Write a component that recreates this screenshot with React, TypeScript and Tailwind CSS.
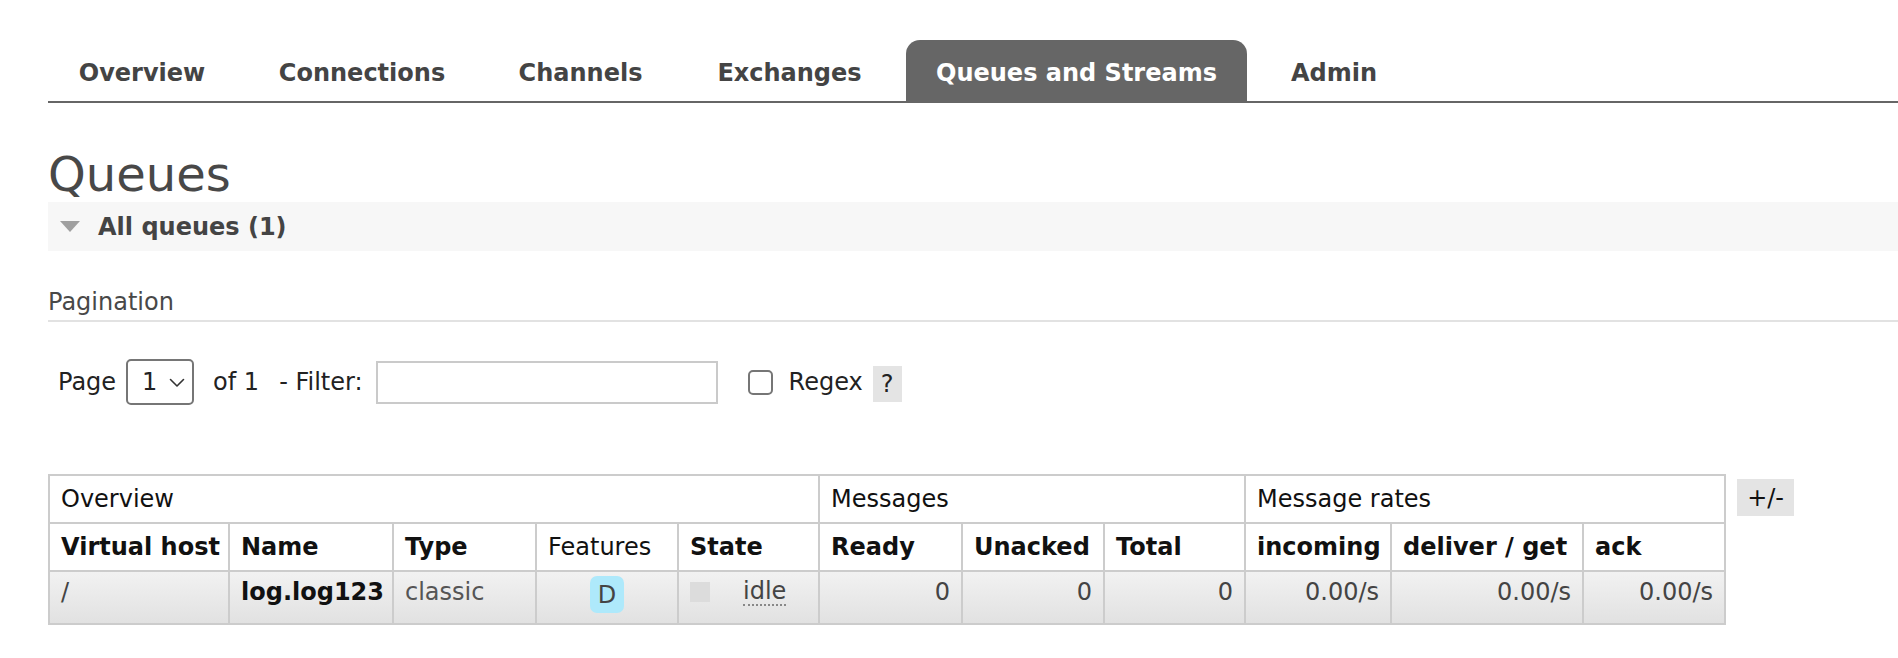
import React from "react";

const tabs = [
  { label: "Overview", w: "w-[188px]" },
  { label: "Connections", w: "w-[226px]" },
  { label: "Channels", w: "w-[185px]" },
  { label: "Exchanges", w: "w-[207px]" },
  { label: "Queues and Streams", w: "w-[341px]", selected: true },
  { label: "Admin", w: "w-[148px]" },
];

function Chevron() {
  return (
    <svg width="16" height="10" viewBox="0 0 16 10" fill="none">
      <path d="M1.5 1.5 L8 8 L14.5 1.5" stroke="#333" strokeWidth="1.6" strokeLinecap="round" strokeLinejoin="round" />
    </svg>
  );
}

export default function App() {
  const th = "border-2 border-[#ccc] px-[11px] text-left align-middle whitespace-nowrap text-[#111]";
  const td = "border-2 border-[#ccc] px-[11px] align-top whitespace-nowrap leading-[28px]";
  return (
    <div className="min-h-[658px] bg-white font-['DejaVu_Sans',Verdana,sans-serif] text-[24px] text-[#484848]">
      <div className="pl-[48px] pt-[40px]">
        {/* Menu tabs */}
        <div className="flex gap-[13px] border-b-2 border-[#666]">
          {tabs.map((t) => (
            <div
              key={t.label}
              className={
                "flex h-[61px] items-center justify-center pt-[4px] font-bold leading-[28px] " +
                t.w +
                (t.selected ? " rounded-t-[14px] bg-[#666] text-white" : " text-[#444]")
              }
            >
              {t.label}
            </div>
          ))}
        </div>

        {/* Heading */}
        <h1 className="mt-[43px] text-[48px] font-normal leading-[56px] text-[#484848]">Queues</h1>

        {/* Section band */}
        <div className="flex h-[49px] items-center bg-[#f7f7f7] pl-[12px]">
          <svg width="20" height="11" viewBox="0 0 20 11" className="mr-[18px]">
            <polygon points="0,0 20,0 10,11" fill="#a0a0a0" />
          </svg>
          <span className="font-bold leading-[28px] text-[#444]">All queues (1)</span>
        </div>

        {/* Pagination */}
        <div className="mt-[37px] border-b-2 border-[#e2e2e2] pb-[4px] leading-[28px] text-[#484848]">Pagination</div>

        <div className="mt-[37px] flex items-center pl-[10px] leading-[28px] text-[#222]">
          <span>Page</span>
          <div className="ml-[10px] flex h-[46px] w-[68px] items-center rounded-[5px] border-2 border-[#767676] pl-[14px]">
            <span>1</span>
            <span className="ml-[12px] mt-[2px]">
              <Chevron />
            </span>
          </div>
          <span className="ml-[19px]">of 1</span>
          <span className="ml-[20px]">- Filter:</span>
          <div className="ml-[13px] h-[43px] w-[342px] border-2 border-[#cacaca] bg-white" />
          <div className="ml-[30px] h-[25px] w-[25px] rounded-[5px] border-2 border-[#767676] bg-white" />
          <span className="ml-[16px]">Regex</span>
          <span className="ml-[10px] mt-[4px] flex h-[36px] w-[29px] items-center justify-center bg-[#e4e4e4]">?</span>
        </div>

        {/* Table */}
        <div className="mt-[69px] flex items-start">
          <table className="w-[1676px] table-fixed border-collapse">
            <colgroup>
              <col className="w-[180px]" />
              <col className="w-[164px]" />
              <col className="w-[143px]" />
              <col className="w-[142px]" />
              <col className="w-[141px]" />
              <col className="w-[143px]" />
              <col className="w-[142px]" />
              <col className="w-[141px]" />
              <col className="w-[146px]" />
              <col className="w-[192px]" />
              <col className="w-[142px]" />
            </colgroup>
            <thead>
              <tr className="h-[48px] bg-white">
                <th colSpan={5} className={th + " font-normal"}>Overview</th>
                <th colSpan={3} className={th + " font-normal"}>Messages</th>
                <th colSpan={3} className={th + " font-normal"}>Message rates</th>
              </tr>
              <tr className="h-[48px] bg-white">
                <th className={th + " font-bold"}>Virtual host</th>
                <th className={th + " font-bold"}>Name</th>
                <th className={th + " font-bold"}>Type</th>
                <th className={th + " font-normal"}>Features</th>
                <th className={th + " font-bold"}>State</th>
                <th className={th + " font-bold"}>Ready</th>
                <th className={th + " font-bold"}>Unacked</th>
                <th className={th + " font-bold"}>Total</th>
                <th className={th + " font-bold"}>incoming</th>
                <th className={th + " font-bold"}>deliver / get</th>
                <th className={th + " font-bold"}>ack</th>
              </tr>
            </thead>
            <tbody>
              <tr className="h-[53px] bg-linear-to-b from-[#f2f2f2] to-[#e1e1e1]">
                <td className={td + " pt-[6px] text-[#444]"}>/</td>
                <td className={td + " pt-[6px] font-bold text-[#111]"}>log.log123</td>
                <td className={td + " pt-[6px] text-[#555]"}>classic</td>
                <td className={td + " pt-[4px]"}>
                  <div className="flex justify-center">
                    <span className="flex h-[37px] w-[34px] items-center justify-center rounded-[7px] bg-[#aee9fb] text-[#444]">D</span>
                  </div>
                </td>
                <td className={td + " pt-[6px]"}>
                  <div className="flex items-center">
                    <span className="h-[20px] w-[20px] bg-[#dcdcdc]" />
                    <span className="ml-[33px] border-b-2 border-dotted border-[#888] leading-[26px] text-[#444]">idle</span>
                  </div>
                </td>
                <td className={td + " pt-[6px] text-right text-[#444]"}>0</td>
                <td className={td + " pt-[6px] text-right text-[#444]"}>0</td>
                <td className={td + " pt-[6px] text-right text-[#444]"}>0</td>
                <td className={td + " pt-[6px] text-right text-[#444]"}>0.00/s</td>
                <td className={td + " pt-[6px] text-right text-[#444]"}>0.00/s</td>
                <td className={td + " pt-[6px] text-right text-[#444]"}>0.00/s</td>
              </tr>
            </tbody>
          </table>
          <div className="ml-[11px] mt-[5px] flex h-[37px] w-[57px] items-center justify-center bg-[#e4e4e4] text-[#111]">+/-</div>
        </div>
      </div>
    </div>
  );
}
